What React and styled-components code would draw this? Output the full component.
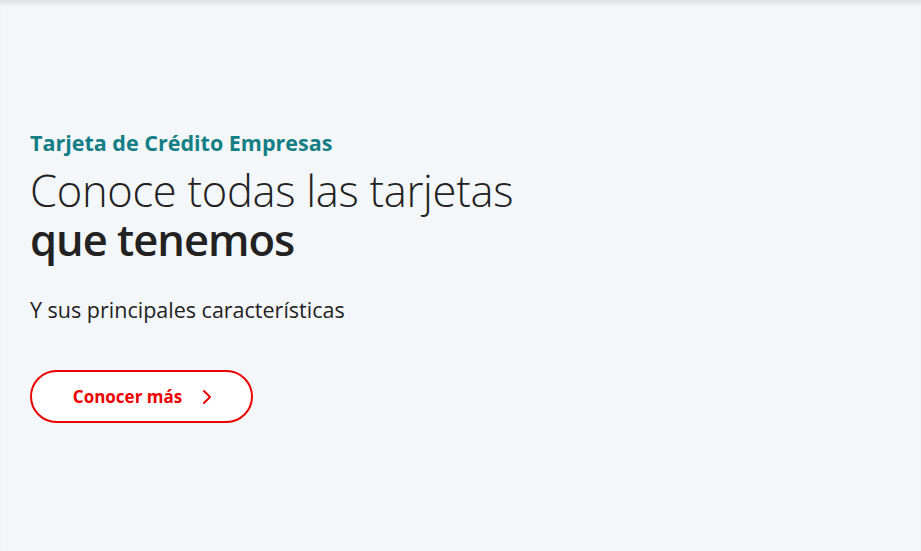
import React from "react";
import styled, { createGlobalStyle } from "styled-components";

const Global = createGlobalStyle`
  html, body {
    margin: 0;
    padding: 0;
    background: #f4f7fa;
  }
  body {
    font-family: "Open Sans", "Liberation Sans", sans-serif;
  }
`;

export default function App() {
  return (
    <>
      <Global />
      <Page>
        <Hero>
          <Eyebrow>Tarjeta de Crédito Empresas</Eyebrow>
          <Title>
            <Light>Conoce todas las tarjetas</Light>
            <Bold>que tenemos</Bold>
          </Title>
          <Subtitle>Y sus principales características</Subtitle>
          <Button>
            Conocer más
            <svg width="14" height="16" viewBox="0 0 14 16" fill="none">
              <path
                d="M4 2l6 6-6 6"
                stroke="#ec0000"
                strokeWidth="2"
                strokeLinecap="round"
                strokeLinejoin="round"
              />
            </svg>
          </Button>
        </Hero>
      </Page>
    </>
  );
}

const Page = styled.div`
  min-height: 551px;
  background: #f4f7fa;
  box-shadow: inset 0 6px 6px -4px rgba(0, 0, 0, 0.12);
`;

const Hero = styled.section`
  padding: 128px 30px 0;
  display: flex;
  flex-direction: column;
  align-items: flex-start;
`;

const Eyebrow = styled.h3`
  margin: 0;
  font-size: 21.5px;
  font-weight: 700;
  color: #137e84;
  line-height: 30px;
`;

const Title = styled.h1`
  margin: 8px 0 0;
  display: flex;
  flex-direction: column;
  font-size: 43.5px;
  color: #222;
  line-height: 49px;
  letter-spacing: -0.3px;
`;

const Light = styled.span`
  font-weight: 300;
`;

const Bold = styled.span`
  font-weight: 600;
  letter-spacing: -1px;
`;

const Subtitle = styled.p`
  margin: 31px 0 0;
  font-size: 21.5px;
  color: #222;
  line-height: 30px;
`;

const Button = styled.button`
  margin-top: 45px;
  width: 223px;
  height: 53px;
  display: flex;
  align-items: center;
  justify-content: center;
  gap: 18px;
  padding: 0 0 0 4px;
  background: #fff;
  border: 2px solid #ec0000;
  border-radius: 27px;
  color: #ec0000;
  font-family: "Open Sans", "Liberation Sans", sans-serif;
  font-size: 17px;
  font-weight: 700;
  cursor: pointer;
`;
